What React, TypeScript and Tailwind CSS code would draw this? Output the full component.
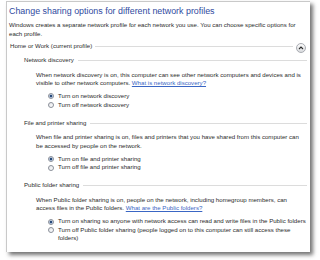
import React from 'react';

function Radio({ checked }: { checked?: boolean }) {
  return (
    <span className="relative mt-[1.5px] h-[6px] w-[6px] shrink-0 rounded-full border border-[#8a8f99] bg-gradient-to-br from-[#e4e6ea] to-[#ffffff]">
      {checked && (
        <span className="absolute left-[1px] top-[1px] h-[2px] w-[2px] rounded-full bg-[#1f3f6a] shadow-[0_0_0_0.5px_#3d6aa8]" />
      )}
    </span>
  );
}

function Option({ checked, lines }: { checked?: boolean; lines: string[] }) {
  return (
    <div className="flex items-start gap-[4px]">
      <Radio checked={checked} />
      <div>
        {lines.map((l) => (
          <div key={l} className="whitespace-nowrap">
            {l}
          </div>
        ))}
      </div>
    </div>
  );
}

function Heading({ text }: { text: string }) {
  return (
    <div className="flex h-[10px] items-center gap-[4px] pr-[3px]">
      <span className="whitespace-nowrap">{text}</span>
      <span className="h-px flex-1 bg-[#dcdcdc]" />
    </div>
  );
}

function Section({
  title,
  desc,
  options,
  className,
}: {
  title: string;
  desc: React.ReactNode[];
  options: { checked?: boolean; lines: string[] }[];
  className?: string;
}) {
  return (
    <div className={className}>
      <div className="pl-[15px]">
        <Heading text={title} />
      </div>
      <div className="mt-[5px] pl-[27px]">
        {desc.map((d, i) => (
          <div key={i} className="whitespace-nowrap">
            {d}
          </div>
        ))}
      </div>
      <div className="mt-[4px] pl-[39px]">
        {options.map((o) => (
          <Option key={o.lines[0]} checked={o.checked} lines={o.lines} />
        ))}
      </div>
    </div>
  );
}

export default function App() {
  return (
    <div className="h-[260px] w-[320px] bg-white pt-px pl-[6px] font-['Liberation_Sans',Arial,sans-serif] text-[6.1px] leading-[8.7px] text-[#2b2b2b]">
      <div className="h-[251px] w-[304px] border-l border-t border-[#c9c9c9] bg-white pl-[2px] pt-[3px] shadow-[3px_3px_4px_rgba(0,0,0,0.55)]">
        <div className="h-[12px] whitespace-nowrap text-[8.9px] leading-[12px] text-[#2f4aa0]">
          Change sharing options for different network profiles
        </div>
        <div className="mt-[2.5px] leading-[9px]">
          <div className="whitespace-nowrap">
            Windows creates a separate network profile for each network you use. You can choose specific options for
          </div>
          <div>each profile.</div>
        </div>

        <div className="mt-[4px] flex h-[10px] items-center gap-[3px] pl-px">
          <span className="whitespace-nowrap">Home or Work (current profile)</span>
          <span className="h-px flex-1 bg-[#dcdcdc]" />
          <span className="mr-[4px] mt-[2px] flex h-[10px] w-[10px] items-center justify-center rounded-full border border-[#a9acb2] bg-gradient-to-b from-[#fbfbfb] to-[#d9dbde]">
            <svg width="6" height="4" viewBox="0 0 6 4">
              <path d="M1 3 L3 1 L5 3" fill="none" stroke="#2b2b2b" strokeWidth="1.1" />
            </svg>
          </span>
        </div>

        <Section
          className="mt-[4px]"
          title="Network discovery"
          desc={[
            'When network discovery is on, this computer can see other network computers and devices and is',
            <>
              visible to other network computers.{' '}
              <span className="text-[#3a66c4] underline">What is network discovery?</span>
            </>,
          ]}
          options={[
            { checked: true, lines: ['Turn on network discovery'] },
            { lines: ['Turn off network discovery'] },
          ]}
        />

        <Section
          className="mt-[9px]"
          title="File and printer sharing"
          desc={[
            'When file and printer sharing is on, files and printers that you have shared from this computer can',
            'be accessed by people on the network.',
          ]}
          options={[
            { checked: true, lines: ['Turn on file and printer sharing'] },
            { lines: ['Turn off file and printer sharing'] },
          ]}
        />

        <Section
          className="mt-[8.5px]"
          title="Public folder sharing"
          desc={[
            'When Public folder sharing is on, people on the network, including homegroup members, can',
            <>
              access files in the Public folders.{' '}
              <span className="text-[#3a66c4] underline">What are the Public folders?</span>
            </>,
          ]}
          options={[
            {
              checked: true,
              lines: ['Turn on sharing so anyone with network access can read and write files in the Public folders'],
            },
            {
              lines: [
                'Turn off Public folder sharing (people logged on to this computer can still access these',
                'folders)',
              ],
            },
          ]}
        />
      </div>
    </div>
  );
}
